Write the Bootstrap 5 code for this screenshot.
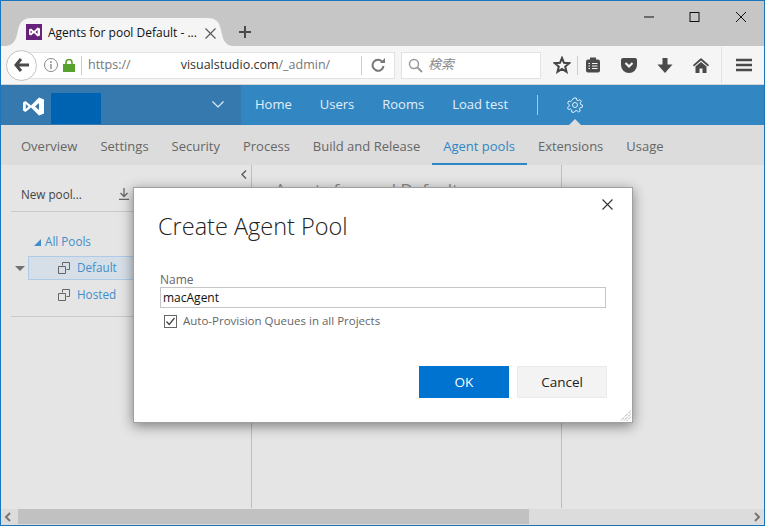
<!DOCTYPE html>
<html lang="en">
<head>
<meta charset="UTF-8">
<meta name="viewport" content="width=device-width, initial-scale=1.0">
<title>Agents for pool Default</title>
<link href="https://cdn.jsdelivr.net/npm/bootstrap@5.3.0/dist/css/bootstrap.min.css" rel="stylesheet">
<style>
html, body { height: 100%; }
body { margin: 0; overflow: hidden; background: #e5e5e5; font-family: "Open Sans", "Noto Sans CJK JP", sans-serif; }
.win { position: relative; width: 765px; height: 526px; border: 1px solid #1b75bc; border-top-width: 1px; overflow: hidden; display: flex; flex-direction: column; }
.tabbar { height: 45px; background: #c6c6c6; padding-top: 17px; padding-left: 3px; flex: none; }
.tab-one { position: relative; width: 230px; height: 28px; padding: 6px 18px 0 22px; gap: 6px; font-size: 12px; color: #111; }
.tab-shape { position: absolute; left: 0; top: 0; }
.tab-one > *:not(.tab-shape) { position: relative; }
.tab-label { width: 151px; white-space: nowrap; }
.win-btns { position: absolute; top: 9px; right: 0; }
.win-btns svg { display: block; }
.toolbar { height: 39px; background: #f5f5f6; border-bottom: 1px solid #d4d4d4; padding-left: 5px; flex: none; }
.back-btn { width: 31px; height: 31px; border-radius: 50%; background: #fff; border: 1px solid #c4c4c4; z-index: 2; flex: none; }
.url-box { width: 370px; height: 27px; margin-left: -12px; background: #fff; border: 1px solid #e2e2e2; padding-left: 17px; font-size: 12.5px; color: #777; white-space: nowrap; }
.url-sep { width: 1px; height: 19px; background: #ccc; }
.url-main { color: #333; }
.url-gap { width: 50px; }
.search-box { width: 140px; height: 27px; margin-left: 6px; background: #fff; border: 1px solid #e2e2e2; padding-left: 6px; gap: 5px; font-size: 13px; font-style: italic; color: #8b8b8b; }
.tool-icons { margin-left: 12px; }
.appbar { height: 40px; background: #3287c3; flex: none; font-size: 13px; color: #e3eef7; }
.app-left { width: 240px; height: 40px; background: #3579ae; padding-left: 22px; }
.acct-box { width: 50px; height: 31px; background: #0063b1; margin-left: 7px; margin-top: 8px; }
.app-link { color: #e3eef7; text-decoration: none; }
.app-sep { width: 1px; height: 20px; background: #a4cbe6; }
.gear-slot { position: relative; height: 40px; }
.gear-slot::after { content: ""; position: absolute; left: 50%; bottom: 0; margin-left: -6px; border: 6px solid transparent; border-top-width: 0; border-bottom-color: #dcdcdc; }
.subnav { height: 40px; background: #dcdcdc; flex: none; padding-left: 9px; font-size: 13px; }
.subnav .sub-link { padding: 0 12px 0 11px; height: 40px; line-height: 42px; color: #666; text-decoration: none; white-space: nowrap; }
.subnav .sub-on { color: #2f86c5; border-bottom: 2px solid #2f86c5; }
.work { flex: 1; min-height: 0; }
.left-pane { width: 251px; border-right: 1px solid #bdbdbd; position: relative; font-size: 11.7px; flex: none; }
.pane-collapse { position: absolute; right: 4px; top: 5px; }
.pane-tools { margin: 0 0 0 10px; height: 47px; padding: 21px 0 0 10px; border-bottom: 1px solid #c9c9c9; color: #444; }
.pane-tree { margin-left: 10px; padding-top: 17px; padding-bottom: 8px; border-bottom: 1px solid #c9c9c9; color: #3f8ecb; }
.tree-row { height: 26px; }
.tree-all { padding-left: 23px; gap: 4px; }
.tree-sel { background: #d6dfe7; border: 1px solid #aecbe6; margin: 1px 0 0 17px; height: 24px; padding-left: 29px; gap: 7px; }
.tree-plain { padding-left: 47px; margin-top: 2px; gap: 7px; }
.tree-caret { position: absolute; left: 14px; top: 101px; border: 5px solid transparent; border-top-color: #707070; border-bottom-width: 0; }
.mid-pane { width: 310px; border-right: 1px solid #bdbdbd; padding: 12px 0 0 23px; font-size: 17px; color: #888; flex: none; white-space: nowrap; }
.hscroll { height: 16px; background: #dcdcdc; margin-top: 1px; flex: none; }
.hs-thumb { position: absolute; left: 17px; width: 511px; height: 15px; background: #c1c1c1; }
.hs-arrow { position: absolute; top: 0; }
.dialog-box { position: absolute; left: 132px; top: 186px; width: 500px; height: 236px; border: 1px solid #a0a0a0; border-radius: 0; box-shadow: 0 3px 12px rgba(0,0,0,.45); padding: 21px 26px 0 26px; }
.dialog-title { font-size: 23.5px; font-weight: 300; color: #222; line-height: 34px; margin: 0 0 29px -2px; }
.dialog-close { position: absolute; right: 19px; top: 11px; }
.name-label { font-size: 12px; color: #666; line-height: 15px; margin: 0; display: block; }
.name-input { height: 21px; border: 1px solid #c6c6c6; border-radius: 0; padding: 0 2px; font-size: 12px; color: #111; width: 446px; }
.auto-check { margin: 5px 0 0 4px; font-size: 11.5px; color: #666; gap: 6px; height: 16px; }
.dialog-btns { position: absolute; left: 285px; top: 178px; gap: 8px; }
.btn-vs { width: 90px; height: 32px; border-radius: 0; font-size: 13.5px; padding: 0; }
.btn-vs-ok { background: #0072cf; border-color: #0072cf; color: #fff; }
.btn-vs-cancel { background: #f3f3f3; border-color: #ebebeb; color: #222; }
.dialog-grip { position: absolute; right: 1px; bottom: 1px; }
</style>
</head>
<body>
<div class="win">

  <div class="tabbar position-relative">
    <div class="d-flex align-items-start">
      <div class="tab-one d-flex align-items-start">
        <svg class="tab-shape" width="230" height="28"><path d="M0 28C10 28 12 22 14 12C16 3 20 0 28 0H202C212 0 215 3 217 12C219 22 221 28 230 28Z" fill="#f5f5f6"/></svg>
        <svg width="16" height="16" viewBox="0 0 16 16"><rect width="16" height="16" fill="#68217a"/><path d="M3 5.500 5 4.500 8 7 11.500 3.500 14 4.500V11.500L11.500 12.500 8 9 5 11.500 3 10.500ZM4.600 6.600V9.400L6.200 8ZM11.600 6 9.400 8 11.600 10Z" fill="#fff" fill-rule="evenodd"/></svg>
        <span class="tab-label">Agents for pool Default - ...</span>
        <svg class="mt-1" width="11" height="11" viewBox="0 0 11 11"><path d="M.5.5 10.500 10.500M10.500.5.5 10.500" stroke="#555" stroke-width="1.100"/></svg>
      </div>
      <svg style="margin:7px 0 0 4px" width="14" height="14" viewBox="0 0 14 14"><path d="M7 1V13M1 7H13" stroke="#4a4a4a" stroke-width="2"/></svg>
    </div>
    <div class="win-btns d-flex">
      <svg width="46" height="14" viewBox="0 0 46 14"><path d="M18 7H28" stroke="#111" stroke-width="1"/></svg>
      <svg width="46" height="14" viewBox="0 0 46 14"><rect x="18" y="2.500" width="9" height="9" fill="none" stroke="#111"/></svg>
      <svg width="46" height="14" viewBox="0 0 46 14"><path d="M18 2 28 12M28 2 18 12" stroke="#111" stroke-width="1"/></svg>
    </div>
  </div>

  <div class="toolbar d-flex align-items-center">
    <div class="back-btn d-flex align-items-center justify-content-center">
      <svg width="16" height="14" viewBox="0 0 16 14"><path d="M7 1 2 7 7 13M2.500 7H15" fill="none" stroke="#4a4a4a" stroke-width="3"/></svg>
    </div>
    <div class="url-box d-flex align-items-center">
      <svg width="16" height="16" viewBox="0 0 16 16"><circle cx="8" cy="8" r="6.500" fill="none" stroke="#8a8a8a"/><path d="M8 7V12M8 4V6" stroke="#8a8a8a" stroke-width="1.400"/></svg>
      <svg class="ms-1" width="12" height="13" viewBox="0 0 12 13"><rect y="5" width="12" height="8" fill="#57a12e"/><path d="M3 5.500V3.500a3 3 0 0 1 6 0V5.500" fill="none" stroke="#57a12e" stroke-width="1.600"/></svg>
      <span class="url-sep" style="margin:0 6px"></span>
      <span>https://</span><span class="url-gap"></span><span class="url-main">visualstudio.com</span><span>/_admin/</span>
      <span class="url-sep ms-auto"></span>
      <svg class="mx-2" width="16" height="16" viewBox="0 0 16 16" style="margin-right:10px"><path d="M12.500 5A5.500 5.500 0 1 0 13.500 9" fill="none" stroke="#777" stroke-width="2"/><path d="M10 6H15V1Z" fill="#777"/></svg>
    </div>
    <div class="search-box d-flex align-items-center">
      <svg width="15" height="15" viewBox="0 0 15 15"><circle cx="6" cy="6" r="4.500" fill="none" stroke="#999" stroke-width="1.500"/><path d="M9.500 9.500 14 14" stroke="#999" stroke-width="2"/></svg>
      <span>検索</span>
    </div>
    <div class="tool-icons d-flex align-items-center">
      <svg width="18" height="18" viewBox="0 0 18 18"><path d="M9 2 11 6.800 16.200 7.200 12.200 10.600 13.500 15.800 9 13 4.500 15.800 5.800 10.600 1.800 7.200 7 6.800Z" fill="none" stroke="#444" stroke-width="2"/></svg>
      <span class="url-sep" style="margin:0 7px 0 6px"></span>
      <svg width="16" height="16" viewBox="0 0 16 16"><rect x="1" y="2.500" width="14" height="13" rx="2" fill="#4a4a4a"/><rect x="5" y=".5" width="6" height="3" fill="#4a4a4a"/><path d="M3.500 6.500H5M7 6.500H12.500M3.500 9H5M7 9H12.500M3.500 11.500H5M7 11.500H12.500" stroke="#f5f5f6" stroke-width="1.200"/></svg>
      <svg style="margin-left:20px" width="16" height="15" viewBox="0 0 16 15"><path d="M2 0H14A2 2 0 0 1 16 2V7A8 8 0 0 1 0 7V2A2 2 0 0 1 2 0Z" fill="#4a4a4a"/><path d="M4.500 5 8 8.500 11.500 5" fill="none" stroke="#f5f5f6" stroke-width="2.200"/></svg>
      <svg style="margin-left:20px" width="16" height="15" viewBox="0 0 16 15"><path d="M5.500 0H10.500V6.500H15.500L8 15 .5 6.500H5.500Z" fill="#4a4a4a"/></svg>
      <svg style="margin-left:20px" width="16" height="15" viewBox="0 0 16 15"><path d="M8 0 16 7 15 8.500 8 2.500 1 8.500 0 7ZM8 4 13.500 8.500V15H9.500V10.500H6.500V15H2.500V8.500Z" fill="#4a4a4a"/></svg>
      <span class="url-sep" style="height:36px;background:#e2e2e2;margin:0 14px 0 12px"></span>
      <svg width="16" height="14" viewBox="0 0 16 14"><path d="M0 2H16M0 7H16M0 12H16" stroke="#4a4a4a" stroke-width="2.600"/></svg>
    </div>
  </div>

  <div class="appbar d-flex align-items-center">
    <div class="app-left d-flex align-items-start">
      <svg style="margin-top:11px" width="21" height="21" viewBox="0 0 21 21"><path d="M0 6.500 2.500 5 8 9.500 16 1.500 21 3.500V17.500L16 19.500 8 11.500 2.500 16 0 14.500ZM2.800 8V13L5.500 10.500ZM16 7 12 10.500 16 14Z" fill="#fff" fill-rule="evenodd"/></svg>
      <div class="acct-box"></div>
      <svg style="margin:16px 0 0 111px" width="12" height="7" viewBox="0 0 12 7"><path d="M.5.5 6 6 11.500.5" fill="none" stroke="#e3eef7" stroke-width="1.200"/></svg>
    </div>
    <nav class="nav align-items-center">
      <a class="app-link" href="#" style="margin-left:14px">Home</a>
      <a class="app-link" href="#" style="margin-left:28px">Users</a>
      <a class="app-link" href="#" style="margin-left:28px">Rooms</a>
      <a class="app-link" href="#" style="margin-left:28px">Load test</a>
      <span class="app-sep" style="margin-left:29px"></span>
      <span class="gear-slot d-flex align-items-center" style="margin-left:29px">
        <svg width="16" height="16" viewBox="0 0 16 16"><circle cx="8" cy="8" r="2.500" fill="none" stroke="#e3eef7"/><path d="M6.700 1H9.300L9.700 3 11.300 3.700 13 2.600 14.400 4.400 13.100 5.900 13.600 7.500 15.500 8 15.300 10.200 13.300 10.500 12.500 12 13.300 13.900 11.500 15 10 13.600 8 14 6.900 15.500 4.700 15 4.700 13 3.300 12 1.400 12.500.5 10.500 2.200 9.300 2 7.500.6 6 1.800 4 3.700 4.500 5 3.300Z" fill="none" stroke="#e3eef7"/></svg>
      </span>
    </nav>
  </div>

  <nav class="subnav nav">
    <a class="sub-link" href="#">Overview</a>
    <a class="sub-link" href="#">Settings</a>
    <a class="sub-link" href="#">Security</a>
    <a class="sub-link" href="#">Process</a>
    <a class="sub-link" href="#">Build and Release</a>
    <a class="sub-link sub-on" href="#">Agent pools</a>
    <a class="sub-link" href="#">Extensions</a>
    <a class="sub-link" href="#">Usage</a>
  </nav>

  <div class="work d-flex">
    <div class="left-pane">
      <svg class="pane-collapse" width="6" height="9" viewBox="0 0 6 9"><path d="M5 .5 1 4.500 5 8.500" fill="none" stroke="#555" stroke-width="1.300"/></svg>
      <div class="pane-tools d-flex">
        <span>New pool...</span>
        <svg style="margin:2px 0 0 37px" width="10" height="12" viewBox="0 0 10 12"><path d="M5 0V8M1.500 5 5 8.500 8.500 5M0 11.500H10" fill="none" stroke="#666" stroke-width="1.300"/></svg>
      </div>
      <div class="pane-tree">
        <div class="tree-row tree-all d-flex align-items-center">
          <svg width="7" height="7" viewBox="0 0 7 7"><path d="M7 0V7H0Z" fill="#3f8ecb"/></svg>
          <span>All Pools</span>
        </div>
        <div class="tree-sel d-flex align-items-center">
          <svg width="12" height="12" viewBox="0 0 12 12"><path d="M4.500 3.500V.5H11.500V7.500H8.500M.5 4.500H7.500V11.500H.5Z" fill="none" stroke="#666"/></svg>
          <span>Default</span>
        </div>
        <div class="tree-row tree-plain d-flex align-items-center">
          <svg width="12" height="12" viewBox="0 0 12 12"><path d="M4.500 3.500V.5H11.500V7.500H8.500M.5 4.500H7.500V11.500H.5Z" fill="none" stroke="#666"/></svg>
          <span>Hosted</span>
        </div>
      </div>
      <span class="tree-caret"></span>
    </div>
    <div class="mid-pane">Agents for pool Default</div>
  </div>

  <div class="hscroll position-relative">
    <svg class="hs-arrow" style="left:3px;top:3px" width="8" height="10" viewBox="0 0 8 10"><path d="M6 1 2 5 6 9" fill="none" stroke="#777" stroke-width="2"/></svg>
    <div class="hs-thumb"></div>
    <svg class="hs-arrow" style="right:3px;top:3px" width="8" height="10" viewBox="0 0 8 10"><path d="M2 1 6 5 2 9" fill="none" stroke="#777" stroke-width="2"/></svg>
  </div>

  <div class="card dialog-box">
    <svg class="dialog-close" width="11" height="11" viewBox="0 0 11 11"><path d="M.5.5 10.500 10.500M10.500.5.5 10.500" stroke="#333" stroke-width="1.100"/></svg>
    <h1 class="dialog-title">Create Agent Pool</h1>
    <label class="name-label" for="poolName">Name</label>
    <input class="form-control name-input" id="poolName" type="text" value="macAgent">
    <div class="auto-check d-flex align-items-center">
      <svg width="13" height="13" viewBox="0 0 13 13"><rect x=".5" y=".5" width="12" height="12" fill="#fff" stroke="#666"/><path d="M2.500 6.500 5.200 9.500 10.500 3" fill="none" stroke="#444" stroke-width="1.300"/></svg>
      <span>Auto-Provision Queues in all Projects</span>
    </div>
    <div class="dialog-btns d-flex">
      <button class="btn btn-vs btn-vs-ok" type="button">OK</button>
      <button class="btn btn-vs btn-vs-cancel" type="button">Cancel</button>
    </div>
    <svg class="dialog-grip" width="11" height="11" viewBox="0 0 11 11"><path d="M10.500 1 1 10.500M10.500 4 4 10.500M10.500 7 7 10.500" stroke="#777" stroke-dasharray="1 1"/></svg>
  </div>

</div>
<script src="https://cdn.jsdelivr.net/npm/bootstrap@5.3.0/dist/js/bootstrap.bundle.min.js"></script>
</body>
</html>
